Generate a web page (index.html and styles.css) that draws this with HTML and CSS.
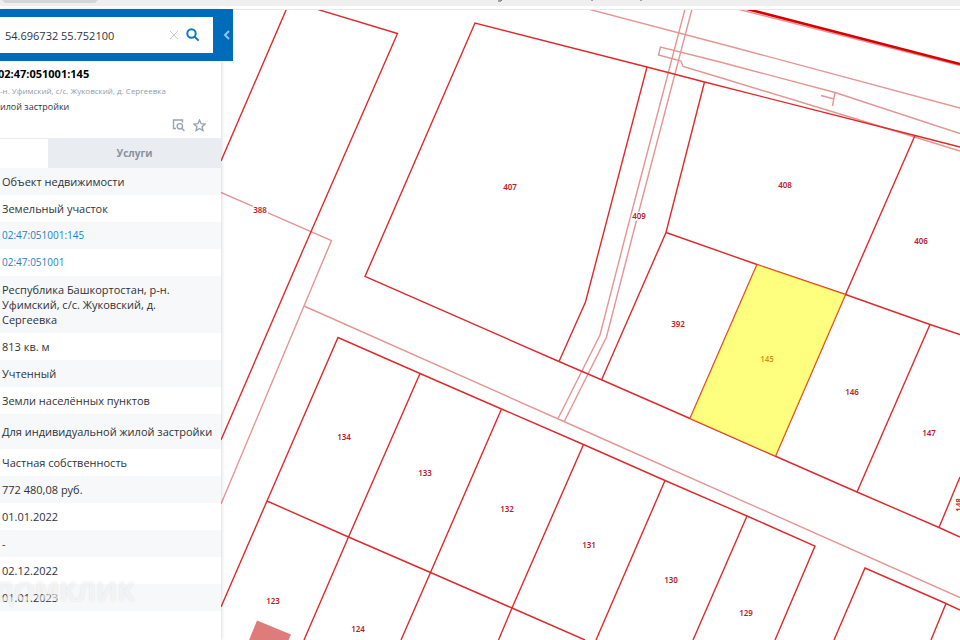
FILE: index.html
```html
<!DOCTYPE html>
<html lang="ru">
<head>
<meta charset="utf-8">
<title>Кадастровая карта</title>
<link rel="stylesheet" href="styles.css">
</head>
<body>
<div class="chrome">
  <svg class="chrome-marks" aria-hidden="true">
    <path class="pill" d="M2 0h96l-3 3H5z"/>
    <path class="mark" d="M498 1h3l1-2M592 0v1M641 0v1"/>
  </svg>
</div>
<main class="app">
  <aside class="panel">
    <form class="search">
      <div class="search-box">
        <input class="search-input" type="text" aria-label="Поиск" value="54.696732 55.752100">
        <button class="icon-btn" type="button" aria-label="Очистить">
          <svg width="10" height="10" viewBox="0 0 10 10"><path class="clear" d="M1 1l8 8M9 1l-8 8"/></svg>
        </button>
        <button class="icon-btn" type="submit" aria-label="Найти">
          <svg width="14" height="14" viewBox="0 0 14 14"><circle class="lens" cx="5.500" cy="5.500" r="4.200"/><path class="lens" d="M8.600 8.600l4 4"/></svg>
        </button>
      </div>
      <button class="collapse" type="button" aria-label="Свернуть">
        <svg width="8" height="10" viewBox="0 0 8 10"><path class="chevron" d="M6 1L2 5l4 4"/></svg>
      </button>
    </form>
    <section class="summary">
      <h1 class="number">02:47:051001:145</h1>
      <p class="place">-н. Уфимский, с/с. Жуковский, д. Сергеевка</p>
      <p class="usage">илой застройки</p>
      <div class="actions">
        <button class="icon-btn" type="button" aria-label="Показать на карте">
          <svg width="13" height="13" viewBox="0 0 13 13"><path class="tool" d="M4 9.500H1.500V1h9v2.500"/><circle class="tool" cx="7.800" cy="7.300" r="2.700"/><path class="tool" d="M9.800 9.300l2.600 2.600"/></svg>
        </button>
        <button class="icon-btn" type="button" aria-label="В избранное">
          <svg width="13" height="13" viewBox="0 0 13 13"><path class="tool" d="M6.500 1.200l1.600 3.500 3.900.4-2.900 2.600.8 3.800-3.400-2-3.400 2 .8-3.800L1 5.100l3.900-.4z"/></svg>
        </button>
      </div>
    </section>
    <nav class="tabs">
      <button class="tab tab-active" type="button" aria-label="Информация"></button>
      <button class="tab" type="button">Услуги</button>
    </nav>
    <table class="facts">
      <tbody>
        <tr><td>Объект недвижимости</td></tr>
        <tr><td>Земельный участок</td></tr>
        <tr><td><a href="#parcel">02:47:051001:145</a></td></tr>
        <tr><td><a href="#block">02:47:051001</a></td></tr>
        <tr><td>Республика Башкортостан, р-н. Уфимский, с/с. Жуковский, д. Сергеевка</td></tr>
        <tr><td>813 кв. м</td></tr>
        <tr><td>Учтенный</td></tr>
        <tr><td>Земли населённых пунктов</td></tr>
        <tr><td class="tall">Для индивидуальной жилой застройки</td></tr>
        <tr><td>Частная собственность</td></tr>
        <tr><td>772 480,08 руб.</td></tr>
        <tr><td>01.01.2022</td></tr>
        <tr><td>-</td></tr>
        <tr><td>02.12.2022</td></tr>
        <tr><td>01.01.2023</td></tr>
      </tbody>
    </table>
    <div class="watermark">домклик</div>
  </aside>
  <section class="map" aria-label="Карта">
    <svg class="map-canvas">
      <g transform="translate(-221 -10)">
        <g class="zone">
          <path d="M221 192.500L331.500 240.500L304 306L221 504"/>
          <path d="M304 306L583 430L960 597.500"/>
          <path d="M685 9L627 230L600 335L558 418.500"/>
          <path d="M692 9L634 230L606.500 337L564.500 421"/>
          <path d="M588 9L740 49L960 108"/>
          <path d="M960 133.500L835 92.500L720 62L660.500 47L658.500 55L681 61L683 66.500L720 77.500L853 118L960 151"/>
          <path d="M835 92.500L832.500 106M821 95.500L834 99"/>
          <path d="M737 9L960 65.500"/>
        </g>
        <path class="border" d="M747 9L960 64"/>
        <path class="building" d="M257 620.500L291 634.500L282 655L243 655z"/>
        <g class="lot">
          <path d="M286.500 9L221 161"/>
          <path d="M286.500 0L397.500 33.500L303 250L221 440"/>
          <path d="M960 147L915 135.500L704.500 82L647 67L475 23L365 276.500L559 361.500L602 380L690 418.500L775 456L857 492L939 527.500L960 537"/>
          <path d="M647 67L585.500 302L559 361.500"/>
          <path d="M704.500 82L666 232.500L601.500 380"/>
          <path d="M666 232.500L757 264.500L845.500 294.500L930 324.500L960 334.500"/>
          <path d="M757 264.500L690 418.500"/>
          <path d="M915 135.500L845.500 294.500L775.500 456"/>
          <path d="M930 324.500L857 492"/>
          <path d="M960 477L939 527.500"/>
          <path d="M221 607L267 501L338 337.500L420 373.500L501.500 409L583.500 444.500L665 480.500L747 516L815 546L775 640"/>
          <path d="M267 501L348.500 537L430.500 572.500L512 608L585 640"/>
          <path d="M420 373.500L348.500 537L304 640"/>
          <path d="M501.500 409L430.500 572.500L401 640"/>
          <path d="M583.500 444.500L512 608L498.500 640"/>
          <path d="M665 480.500L596 640"/>
          <path d="M747 516L693 640"/>
          <path d="M834 640L865 568L946 603.500L960 610"/>
          <path d="M946 603.500L931 640"/>
        </g>
        <g class="label">
          <text x="260" y="213">388</text>
          <text x="510" y="190">407</text>
          <text x="639" y="219">409</text>
          <text x="785" y="188">408</text>
          <text x="921" y="244">406</text>
          <text x="678" y="327">392</text>
          <text x="767" y="362">145</text>
          <text x="852" y="395">146</text>
          <text x="929" y="436">147</text>
          <text x="344" y="440">134</text>
          <text x="425" y="476">133</text>
          <text x="507" y="512">132</text>
          <text x="589" y="548">131</text>
          <text x="671" y="583">130</text>
          <text x="746" y="616">129</text>
          <text x="273" y="604">123</text>
          <text x="358" y="632">124</text>
          <text transform="translate(962 505) rotate(-90)">148</text>
        </g>
        <path class="selected" d="M757 264.500L845.500 294.500L775.500 456L690 418.500z"/>
      </g>
    </svg>
  </section>
</main>
</body>
</html>
```
FILE: styles.css
```css
* {
  box-sizing: border-box;
}

body {
  margin: 0;
  height: 100vh;
  overflow: hidden;
  display: flex;
  flex-direction: column;
  background: #fff;
  color: #2f3338;
  font: 11px/15px "Open Sans", "Noto Sans", sans-serif;
}

button {
  border: 0;
  padding: 0;
  background: none;
  font: inherit;
}

svg {
  display: block;
  fill: none;
}

.chrome {
  flex: none;
  height: 10px;
  border-bottom: 1px solid #e8e8e8;
  background: linear-gradient(#efefef 6px, #fff 6px);
}

.chrome-marks {
  width: 100%;
  height: 6px;
}

.pill {
  fill: #d5d5d5;
}

.mark {
  stroke: #555;
  stroke-width: 1;
}

.app {
  flex: 1;
  min-height: 0;
  display: flex;
}

.panel {
  position: relative;
  z-index: 1;
  flex: none;
  width: 221px;
  background: #fff;
  box-shadow: 0 0 4px rgba(60, 80, 100, 0.3);
}

.search {
  display: flex;
  margin: -1px -12px 0 0;
  padding: 8px 0;
  background: #006cb9;
}

.search-box {
  flex: 1;
  display: flex;
  align-items: center;
  gap: 7px;
  height: 36px;
  padding-right: 13px;
  background: #fff;
}

.search-input {
  flex: 1;
  min-width: 0;
  border: 0;
  padding: 0 0 0 5px;
  background: none;
  color: #2f3338;
  font: inherit;
}

.collapse {
  width: 20px;
  display: grid;
  place-items: center end;
  padding-right: 2px;
}

.clear {
  stroke: #c3c9d0;
}

.lens {
  stroke: #0a78c2;
  stroke-width: 2;
}

.chevron {
  stroke: #8fc3e8;
  stroke-width: 2;
}

.summary {
  height: 77px;
  padding-top: 5px;
  white-space: nowrap;
  overflow: hidden;
}

.number {
  margin: 0 0 0 -2px;
  color: #000;
  font-size: 11px;
  line-height: 16px;
}

.place {
  margin: 0;
  color: #8f9cab;
  font-size: 8px;
  line-height: 17px;
}

.usage {
  margin: 0;
  font-size: 9px;
  line-height: 15px;
}

.actions {
  display: flex;
  justify-content: flex-end;
  gap: 8px;
  padding: 5px 15px 0 0;
}

.tool {
  stroke: #97a4b4;
  stroke-width: 1.4;
}

.tabs {
  display: flex;
  height: 30px;
  border-top: 1px solid #e9ecf0;
}

.tab {
  flex: 1;
  background: #e9edf1;
  color: #87929e;
  font-size: 10px;
  font-weight: 700;
}

.tab-active {
  flex: none;
  width: 48px;
  background: #fff;
}

.facts {
  width: 100%;
  border-collapse: collapse;
}

.facts td {
  padding: 6px 8px 6px 2px;
}

.facts .tall {
  padding-top: 10px;
  padding-bottom: 10px;
}

.facts tr:nth-child(odd) {
  background: #f7f8fa;
}

.facts a {
  display: block;
  color: #1f80c5;
  font-size: 10px;
  text-decoration: none;
}

.watermark {
  position: absolute;
  right: 86px;
  bottom: 34px;
  color: rgba(255, 255, 255, 0.6);
  font: 700 26px/30px "Open Sans", sans-serif;
  text-transform: uppercase;
  text-shadow: 0 0 2px rgba(120, 120, 120, 0.2);
}

.map {
  flex: 1;
  min-width: 0;
}

.map-canvas {
  width: 100%;
  height: 100%;
}

.zone {
  stroke: #e69494;
  stroke-width: 1.4;
}

.border {
  stroke: #d60000;
  stroke-width: 2.5;
}

.lot {
  stroke: #de2a2d;
  stroke-width: 1.4;
}

.building {
  fill: #de7c7c;
}

.label {
  fill: #b92026;
  stroke: #fff;
  stroke-width: 3;
  paint-order: stroke;
  font: 600 8px/10px "Noto Sans", sans-serif;
  text-anchor: middle;
}

.selected {
  fill: rgba(255, 255, 0, 0.5);
}
```
